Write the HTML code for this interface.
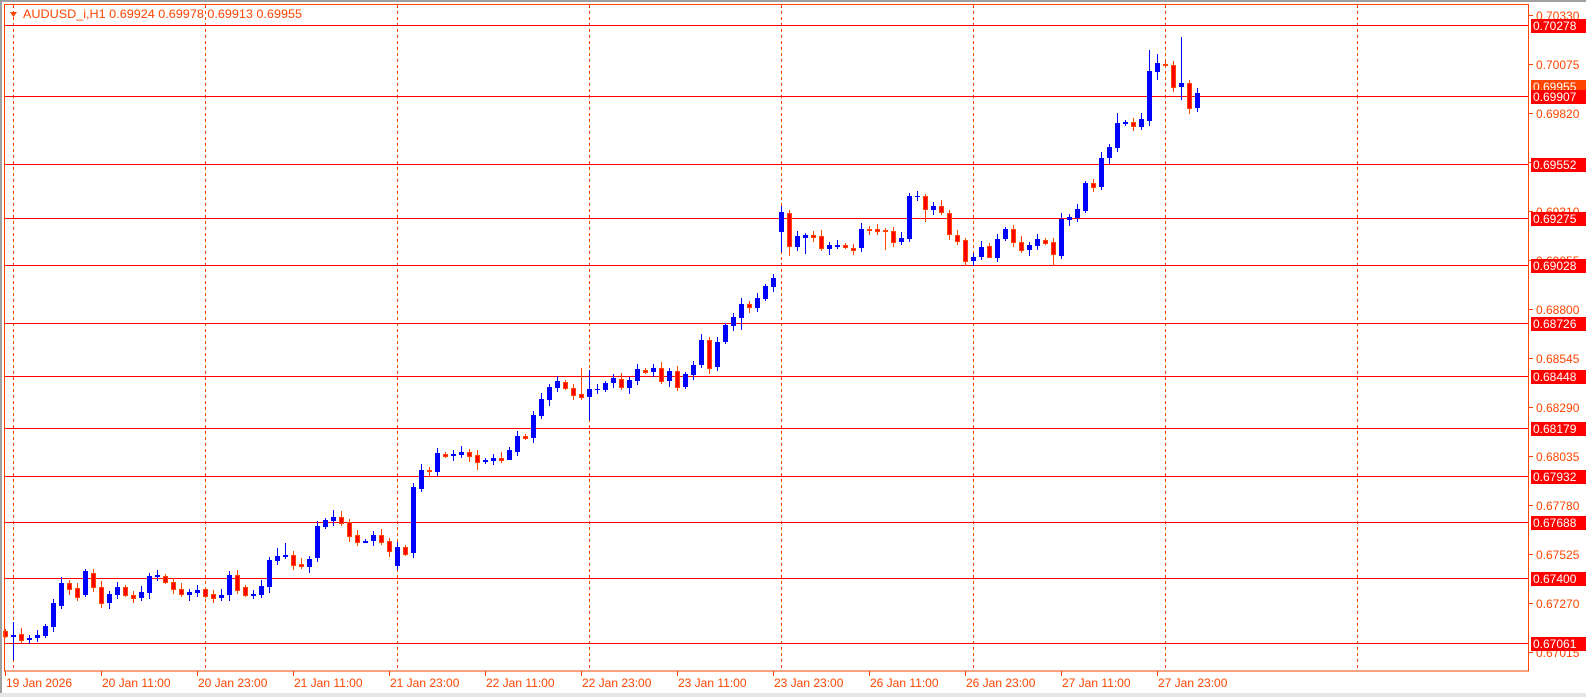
<!DOCTYPE html>
<html><head><meta charset="utf-8"><style>
html,body{margin:0;padding:0;background:#fff;overflow:hidden}
svg{display:block}
text{font-family:"Liberation Sans",sans-serif;font-size:12px}
</style></head><body>
<svg id="s" width="1586" height="697" xmlns="http://www.w3.org/2000/svg">
<rect x="0" y="0" width="1586" height="697" fill="#fff"/>
<rect x="0" y="0" width="1586" height="2" fill="#a0a0a0"/>
<rect x="0" y="0" width="2" height="697" fill="#a0a0a0"/>
<rect x="0" y="693" width="1586" height="4" fill="#e6e6e6"/>
<g id="grid"></g>
<g id="hl"></g>
<g id="c"></g>
<rect x="4.5" y="4.5" width="1524" height="666.5" fill="none" stroke="#ff4500" stroke-width="1"/>
<polygon points="10,12 17,12 13.5,17" fill="#ff4500"/>
<text x="23" y="18" fill="#ff4500" textLength="279" lengthAdjust="spacingAndGlyphs">AUDUSD_i,H1  0.69924 0.69978 0.69913 0.69955</text>
<g id="ax"></g>
</svg>
<script>
var NS='http://www.w3.org/2000/svg';
function add(g,tag,attrs,txt){var e=document.createElementNS(NS,tag);for(var k in attrs)e.setAttribute(k,attrs[k]);if(txt)e.textContent=txt;document.getElementById(g).appendChild(e);return e;}
// vertical dashed grid
for(var i=0;i<8;i++){var x=13.5+i*192;add('grid','line',{x1:x,y1:5,x2:x,y2:671,stroke:'#ff4500','stroke-dasharray':'3,3','stroke-width':1});}
// horizontal lines + labels
var hl=[['0.70278',25],['0.69907',96],['0.69552',164],['0.69275',218],['0.69028',265],['0.68726',323],['0.68448',376],['0.68179',428],['0.67932',476],['0.67688',522],['0.67400',578],['0.67061',643]];
// tick labels
var tk=['0.70330','0.70075','0.69820','0.69565','0.69310','0.69055','0.68800','0.68545','0.68290','0.68035','0.67780','0.67525','0.67270','0.67015'];
for(var i=0;i<tk.length;i++){var y=15+i*49;add('ax','line',{x1:1529,y1:y+0.5,x2:1533,y2:y+0.5,stroke:'#ff4500'});add('ax','text',{x:1536,y:y+5,fill:'#ff4500'},tk[i]);}
hl.forEach(function(h){add('hl','line',{x1:5,y1:h[1]+0.5,x2:1529,y2:h[1]+0.5,stroke:'#ff0000','stroke-width':1});});
// bid label
add('ax','rect',{x:1531,y:80,width:55,height:14,fill:'#ff4500'});
add('ax','text',{x:1533,y:91,fill:'#fff'},'0.69955');
hl.forEach(function(h){add('ax','rect',{x:1531,y:h[1]-6,width:55,height:14,fill:'#ff0000'});add('ax','text',{x:1533,y:h[1]+5,fill:'#fff'},h[0]);});
// bottom axis
var bl=['19 Jan 2026','20 Jan 11:00','20 Jan 23:00','21 Jan 11:00','21 Jan 23:00','22 Jan 11:00','22 Jan 23:00','23 Jan 11:00','23 Jan 23:00','26 Jan 11:00','26 Jan 23:00','27 Jan 11:00','27 Jan 23:00'];
for(var i=0;i<bl.length;i++){var x=5+i*96;add('ax','line',{x1:x+0.5,y1:671,x2:x+0.5,y2:676,stroke:'#ff4500'});add('ax','text',{x:x+1,y:687,fill:'#ff4500'},bl[i]);}
// candles: [color, top, bottom]
var C=[['r',631,636],['b',635,635],['r',634,640],['b',638,638],['b',635,638],['b',626,636],['b',603,627],['b',583,606],['r',583,589],['r',588,597],
['b',571,595],['r',573,587],['r',587,603],['b',594,603],['b',587,595],['r',587,595],['r',595,598],['b',592,598],['b',576,593],['b',575,577],
['r',576,582],['r',582,589],['r',589,594],['b',592,595],['b',590,593],['r',589,596],['r',594,598],['b',595,598],['b',575,595],['r',575,590],
['r',587,595],['b',594,594],['b',586,595],['b',560,587],['b',556,561],['b',555,557],['r',555,565],['r',564,566],['b',559,567],['b',526,558],
['b',520,527],['b',517,521],['r',517,523],['r',522,536],['r',535,542],['b',541,541],['b',535,541],['r',535,542],['r',541,551],['b',547,566],
['r',547,554],['b',487,553],['b',470,489],['r',470,471],['b',453,472],['r',454,456],['b',454,456],['b',452,455],['r',452,456],['r',455,462],
['b',460,462],['b',458,461],['r',458,460],['b',450,460],['b',436,452],['r',436,438],['b',415,438],['b',399,416],['b',387,400],['b',381,388],
['r',382,388],['r',388,395],['r',394,397],['b',389,397],['b',389,390],['b',383,390],['b',378,383],['r',379,387],['b',380,388],['b',369,381],
['r',370,372],['b',368,372],['r',368,381],['b',371,381],['r',371,387],['b',374,387],['b',365,375],['b',340,365],['r',340,368],['b',342,367],
['b',325,342],['b',317,326],['b',304,318],['r',304,307],['b',298,308],['b',286,299],['b',278,287],['b',212,232],['r',213,246],['b',236,247],
['b',235,238],['r',235,237],['r',236,248],['b',245,249],['b',245,245],['r',245,247],['r',248,250],['b',229,248],['r',229,229],['r',229,231],
['r',230,231],['r',231,242],['b',238,242],['b',196,239],['b',196,197],['r',196,209],['b',206,210],['r',206,212],['r',213,234],['r',235,241],
['r',240,261],['b',257,261],['b',247,257],['r',246,257],['b',239,258],['b',229,239],['r',229,242],['r',242,250],['b',245,250],['b',239,246],
['r',240,243],['r',242,254],['b',219,256],['b',217,220],['b',209,218],['b',183,211],['r',183,187],['b',158,187],['b',147,158],['b',123,148],
['b',122,124],['r',122,126],['b',119,127],['b',71,121],['b',63,72],['r',64,65],['r',65,87],['b',83,87],['r',83,108],['b',93,108]];
var ov={1:[622,660],73:[370,420],97:[null,252],143:[50,126],144:[54,80],147:[37,100],139:[113,null],120:[null,266],110:[null,250],107:[null,252],59:[null,470],
72:[368,null],41:[510,null],43:[null,542],12:[null,608],34:[548,null],35:[543,null],61:[null,465],63:[null,457],28:[571,null],113:[null,242],115:[null,222],100:[null,254],87:[null,368],92:[null,330],124:[null,262],
131:[null,266],123:[null,256],98:[null,256]};
for(var i=0;i<C.length;i++){var c=C[i],x=13+(i-1)*8,t=c[1],b=c[2];
var hi=t-2-(i*7%5),lo=b+2+(i*3%5);if(ov[i]){if(ov[i][0]!=null)hi=ov[i][0];if(ov[i][1]!=null)lo=ov[i][1];}
var col=c[0]=='b'?'#0000ff':'#ff4500';
add('c','line',{x1:x+0.5,y1:hi,x2:x+0.5,y2:lo,stroke:col,'stroke-width':1});
var h=Math.max(b-t,1);
if(c[0]=='b')add('c','rect',{x:x-2,y:t,width:5,height:h+ (b-t<1?1:0),fill:'#0000ff'});
else{ if(b-t<=1) add('c','rect',{x:x-2,y:t,width:5,height:2,fill:'#ff4500'});
 else add('c','rect',{x:x-1.5,y:t+0.5,width:4,height:h,fill:'#ff0000',stroke:'#ff4500','stroke-width':1});}
}
</script>
</body></html>
